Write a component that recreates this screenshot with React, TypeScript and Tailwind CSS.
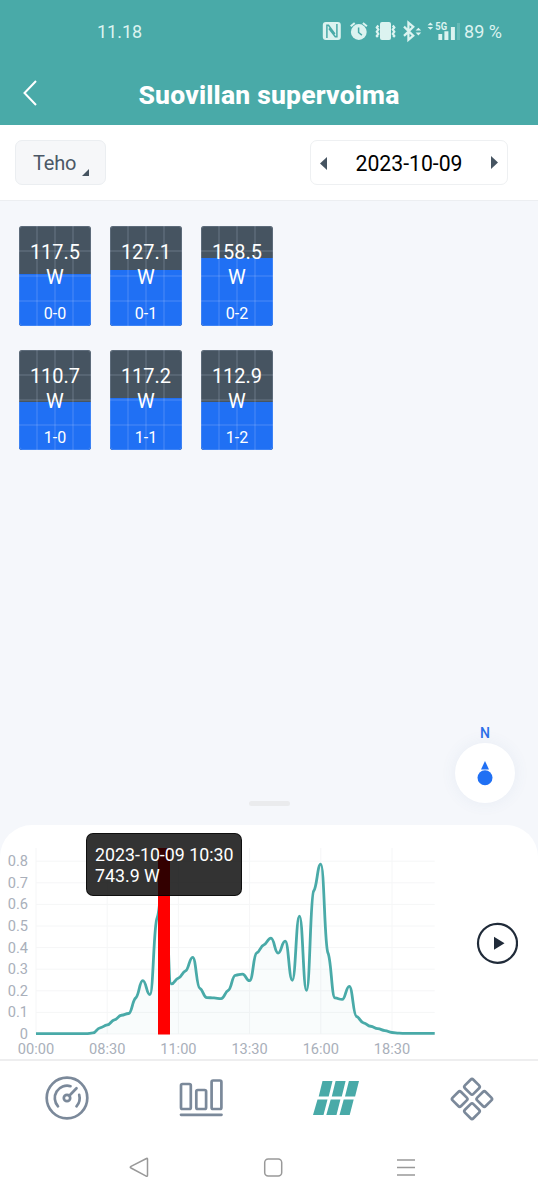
import React from "react";

const TEAL = "#49aaa8";

const panels = [
  { id: "0-0", value: "117.5", fill: 52 },
  { id: "0-1", value: "127.1", fill: 56 },
  { id: "0-2", value: "158.5", fill: 68 },
  { id: "1-0", value: "110.7", fill: 48 },
  { id: "1-1", value: "117.2", fill: 51.5 },
  { id: "1-2", value: "112.9", fill: 48 },
];

const power = [
  0, 0, 0, 0, 0, 0, 0, 0, 0.003, 0.027, 0.04, 0.063, 0.085, 0.093, 0.165, 0.245, 0.18, 0.535, 0.744, 0.23, 0.257,
  0.29, 0.353, 0.21, 0.167, 0.165, 0.162, 0.2, 0.27, 0.275, 0.245, 0.374, 0.411, 0.442, 0.373, 0.428, 0.247, 0.544,
  0.2, 0.66, 0.785, 0.374, 0.165, 0.158, 0.219, 0.08, 0.05, 0.034, 0.023, 0.014, 0.005, 0.002, 0.001, 0.001, 0.001,
  0.001, 0.001,
];

const X0 = 36;
const STEP = 7.12;
const BASE = 209;
const UNIT = 216;
const ticks = [0, 0.1, 0.2, 0.3, 0.4, 0.5, 0.6, 0.7, 0.8];
const times = ["00:00", "08:30", "11:00", "13:30", "16:00", "18:30"];

// Monotone cubic interpolation with flattened tangents, so every sample reads as a soft step.
function monotonePath(values: number[]): string {
  const ys = values.map((v) => BASE - 0.4 - v * UNIT);
  const slopes = ys.slice(1).map((y, i) => (y - ys[i]) / STEP);
  const tangents = ys.map((_, i) => {
    if (i === 0 || i === ys.length - 1) return 0;
    const a = slopes[i - 1];
    const b = slopes[i];
    if (a * b <= 0) return 0;
    return Math.sign(a) * Math.min(Math.abs(a), Math.abs(b)) * 0.3;
  });
  let d = `M${X0} ${ys[0]}`;
  for (let i = 1; i < ys.length; i++) {
    const x = X0 + i * STEP;
    const t = STEP * 0.48;
    d += `C${x - STEP + t} ${ys[i - 1] + tangents[i - 1] * t} ${x - t} ${ys[i] - tangents[i] * t} ${x} ${ys[i]}`;
  }
  return d;
}

function StatusIcons() {
  return (
    <svg width="138" height="24" viewBox="322 18 138 24" fill="none" stroke="#dcf3f0">
      <rect x="322.8" y="21" width="18" height="18" rx="3" fill="#dcf3f0" stroke="none" />
      <path d="M326.9 37V24.2h1.6l6.4 8.8M336.9 23V35.8h-1.6l-6.4-8.3" stroke={TEAL} strokeWidth="1.5" />
      <circle cx="358.8" cy="31" r="7.9" fill="#dcf3f0" stroke="none" />
      <path d="M350.7 25.2l4-3.3M366.9 25.2l-4-3.3" strokeWidth="2" />
      <path d="M358.6 26.5v5l3.3 2.7" stroke={TEAL} strokeWidth="1.5" />
      <rect x="380" y="21" width="11" height="18" rx="2" fill="#dcf3f0" stroke="none" />
      <path d="M378.3 24.5l-1.5 2 1.5 2-1.5 2.2 1.5 2.2-1.5 2 1 1.3M392.8 24.5l1.5 2-1.5 2 1.5 2.2-1.5 2.2 1.5 2-1 1.3" strokeWidth="2.2" />
      <path d="M404 25.6l9.3 9-4.9 4.2V21.7l4.9 4.2-9.3 9" strokeWidth="2.2" />
      <path d="M415.6 29.6h5.6L418.4 26.7zM415.6 31.6h5.6l-2.8 2.8z" fill="#dcf3f0" stroke="none" />
      <path d="M427.6 24.2h5.6l-2.8-2.8zM427.6 26h5.6l-2.8 2.8z" fill="#dcf3f0" stroke="none" />
      <text x="435.3" y="28.6" fill="#dcf3f0" stroke="none" fontFamily="Roboto, sans-serif" fontSize="10" fontWeight="700" textLength="11.8" lengthAdjust="spacingAndGlyphs">
        5G
      </text>
      <path d="M438.4 39h3.8v-6h-3.8zM444.4 39h4v-8.7h-4zM450.9 39h4V26h-4z" fill="#dcf3f0" stroke="none" />
      <path d="M457 39h4V22h-4z" fill="#66b8b5" stroke="none" />
    </svg>
  );
}

function Panel({ id, value, fill }: { id: string; value: string; fill: number }) {
  return (
    <div className="relative flex h-[100px] w-[72px] flex-col items-center overflow-hidden rounded-[3px] bg-[#465461]">
      <div className="absolute inset-x-0 bottom-0 bg-[#2070f4]" style={{ height: `${fill}%` }} />
      <svg className="absolute inset-0" width="72" height="100" stroke="#dbe8ff" strokeOpacity=".24" strokeWidth="1" fill="none">
        <path d="M18 0v100M36 0v100M54 0v100M0 25h72M0 50h72M0 75h72" />
        <rect x=".5" y=".5" width="71" height="99" rx="3" strokeOpacity=".16" />
      </svg>
      <div className="relative mt-[14px] text-center text-[20px] leading-[25px] text-white">
        <div>{value}</div>
        <div>W</div>
      </div>
      <div className="relative mt-[14px] text-[16px] leading-[20px] text-white">{id}</div>
    </div>
  );
}

function PowerChart() {
  const line = monotonePath(power);
  const right = X0 + 56 * STEP;
  return (
    <svg width="450" height="234" className="block" fontFamily="Roboto, sans-serif" fontSize="14.6" fill="#a9afba">
      <g stroke="#f5f6f7" strokeWidth="1">
        {ticks.map((t) => (
          <path key={t} d={`M${X0} ${BASE - t * UNIT}H${right}`} />
        ))}
        {times.map((t, i) => (
          <path key={t} d={`M${X0 + i * 71.2} 23V${BASE}`} />
        ))}
      </g>
      {ticks.map((t) => (
        <text key={t} x="28" y={BASE + 5 - t * UNIT} textAnchor="end">
          {t}
        </text>
      ))}
      {times.map((t, i) => (
        <text key={t} x={X0 + i * 71.2} y="229" textAnchor="middle">
          {t}
        </text>
      ))}
      <path d={`${line}V${BASE}H${X0}Z`} fill={TEAL} fillOpacity=".035" />
      <path d={line} fill="none" stroke={TEAL} strokeWidth="2.8" strokeLinejoin="round" />
      <rect x="158" y="23" width="12" height="186.5" fill="#ff0000" />
    </svg>
  );
}

export default function App() {
  return (
    <div className="flex h-[1200px] w-[538px] flex-col overflow-hidden bg-white font-['Roboto',sans-serif]">
      <header className="flex h-[125px] shrink-0 flex-col bg-[#49aaa8]">
        <div className="flex h-[62px] items-center pr-[36px] pl-[97px] text-[18px] text-[#dcf3f0]">
          <span>11.18</span>
          <div className="ml-auto flex items-center gap-[4px]">
            <StatusIcons />
            <span className="text-[18px] whitespace-nowrap">89 %</span>
          </div>
        </div>
        <div className="grid h-[63px] grid-cols-[60px_1fr_60px] items-center">
          <svg width="16" height="28" viewBox="0 0 16 28" className="-mt-[2px] ml-[22px]" fill="none" stroke="#fff" strokeWidth="2">
            <path d="M14 2L2.5 14 14 26" />
          </svg>
          <h1 className="mt-[2px] text-center text-[26.5px] font-extrabold tracking-[0.2px] whitespace-nowrap text-white">
            Suovillan supervoima
          </h1>
        </div>
      </header>

      <div className="flex h-[76px] shrink-0 items-center justify-between border-b border-[#eceef1] pr-[30px] pl-[15px]">
        <button className="flex h-[45px] w-[91px] items-center rounded-[7px] border border-[#ebeef1] bg-[#f6f7f9] pl-[17px] text-[20px] text-[#4b5866]">
          <span className="mt-px w-[42px] tracking-[-0.2px]">Teho</span>
          <svg width="8" height="7" className="mt-[19px] ml-[7px]" fill="#465461">
            <path d="M7 0v7H0z" />
          </svg>
        </button>
        <div className="flex h-[45px] w-[198px] items-center justify-between rounded-[7px] border border-[#eef0f2] px-[9px] text-[21.2px] text-black">
          <svg width="7" height="13" fill="#465461" className="translate-y-px">
            <path d="M7 0v13L0 6.5z" />
          </svg>
          <span className="mt-[2px]">2023-10-09</span>
          <svg width="7" height="13" fill="#465461">
            <path d="M0 0v13l7-6.5z" />
          </svg>
        </div>
      </div>

      <main className="flex h-[624px] shrink-0 flex-col bg-[#f5f7fb] pt-[25px]">
        <div className="ml-[19px] grid w-[254px] grid-cols-3 gap-x-[19px] gap-y-[23.6px]">
          {panels.map((p) => (
            <Panel key={p.id} {...p} />
          ))}
        </div>
        <div className="mt-auto mr-[23px] flex flex-col items-center self-end">
          <span className="h-[19px] text-[14px] leading-[19px] font-medium text-[#2b6fe8]">N</span>
          <div className="flex size-[60px] items-center justify-center rounded-full bg-white shadow-[0_0_16px_rgba(80,110,170,0.08)]">
            <svg width="16" height="26" fill="#2070f4">
              <path d="M8 1l4 8.5H4z" />
              <circle cx="8" cy="17.7" r="7.5" />
            </svg>
          </div>
        </div>
        <div className="mt-[-2px] mb-[19px] ml-[249px] h-[5px] w-[41px] rounded-full bg-[#eaebed]" />
      </main>

      <div className="h-[236px] shrink-0 bg-[#f5f7fb]">
        <section className="relative flex h-full items-start rounded-t-[32px] border-b-2 border-[#eeeeef] bg-white">
          <PowerChart />
          <button className="mt-[97px] ml-[26px] flex size-[42px] items-center justify-center">
            <svg width="42" height="42" fill="none">
              <circle cx="21.5" cy="21.3" r="19.5" stroke="#202b39" strokeWidth="2.2" />
              <path d="M18 14.8v13L28.5 21.3z" fill="#202b39" />
            </svg>
          </button>
          <div className="absolute top-[8px] left-[86px] h-[63px] w-[156px] rounded-[7px] border border-black/70 bg-black/80 pt-[10px] pl-[8px] text-[17.8px] leading-[21px] whitespace-nowrap text-white">
            <div>2023-10-09 10:30</div>
            <div>743.9 W</div>
          </div>
        </section>
      </div>

      <nav className="flex h-[79px] shrink-0 items-center justify-around">
        <svg width="46" height="46" viewBox="0 0 46 46" className="-mt-[6px]" fill="none" stroke="#7b899a" strokeWidth="2.7" strokeLinecap="round">
          <circle cx="23" cy="23" r="20.3" />
          <circle cx="23" cy="23" r="3.2" />
          <path d="M25.5 20.5L32.5 13.3M14 31.3A12.3 12.3 0 0 1 26.5 11.2M35.2 19.8A12.5 12.5 0 0 1 32.5 31.3" />
        </svg>
        <svg width="46" height="46" viewBox="0 0 46 46" className="-mt-[6px]" fill="none" stroke="#7b899a" strokeWidth="2.7" strokeLinecap="round">
          <rect x="3" y="9" width="9.8" height="25" rx="1.5" />
          <rect x="18.3" y="15" width="9.8" height="19" rx="1.5" />
          <rect x="33.6" y="5.5" width="9.8" height="28.5" rx="1.5" />
          <path d="M3 39.8h40.5" />
        </svg>
        <svg width="48" height="36" viewBox="0 0 48 36" className="-mt-[6px]" fill={TEAL}>
          <path d="M10.5 1h10L16.7 16.5h-10zM23.6 1h10L29.8 16.5h-10zM36.9 1H47l-3.9 15.5H33zM5.5 19.5h10L11.5 35H1zM18.7 19.5h9.7L24.5 35H14.3zM31.7 19.5h10L37.7 35H27.5z" />
        </svg>
        <svg width="46" height="46" viewBox="0 0 46 46" className="-mt-[4px] translate-x-px" fill="none" stroke="#7b899a" strokeWidth="2.7">
          <rect x="17" y="4.8" width="12" height="12" rx="2" transform="rotate(45 23 10.8)" />
          <rect x="17" y="29.2" width="12" height="12" rx="2" transform="rotate(45 23 35.2)" />
          <rect x="4.7" y="17" width="12" height="12" rx="2" transform="rotate(45 10.7 23)" />
          <rect x="29.3" y="17" width="12" height="12" rx="2" transform="rotate(45 35.3 23)" />
        </svg>
      </nav>

      <div className="flex h-[60px] shrink-0 items-start justify-between pt-[16px] pr-[123px] pl-[129px]">
        <svg width="20" height="22" fill="none" stroke="#999" strokeWidth="1.5" strokeLinejoin="round">
          <path d="M17.5 2.5Q18.5 2 18.5 3.2v16q0 1.5-1.3 1L2 12q-1.5-.8 0-1.7z" />
        </svg>
        <svg width="20" height="22" fill="none" stroke="#999" strokeWidth="1.5">
          <rect x="1.7" y="3" width="17" height="17" rx="3.5" />
        </svg>
        <svg width="18" height="22" fill="none" stroke="#999" strokeWidth="1.7">
          <path d="M0 4h18M0 11.5h18M0 19h18" />
        </svg>
      </div>
    </div>
  );
}
